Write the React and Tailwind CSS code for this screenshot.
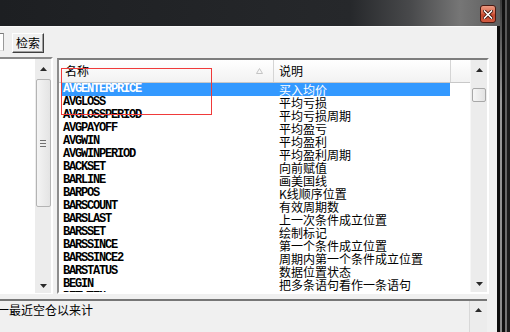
import React from "react";

const rows = [
  ["AVGENTERPRICE", "买入均价"],
  ["AVGLOSS", "平均亏损"],
  ["AVGLOSSPERIOD", "平均亏损周期"],
  ["AVGPAYOFF", "平均盈亏"],
  ["AVGWIN", "平均盈利"],
  ["AVGWINPERIOD", "平均盈利周期"],
  ["BACKSET", "向前赋值"],
  ["BARLINE", "画美国线"],
  ["BARPOS", "K线顺序位置"],
  ["BARSCOUNT", "有效周期数"],
  ["BARSLAST", "上一次条件成立位置"],
  ["BARSSET", "绘制标记"],
  ["BARSSINCE", "第一个条件成立位置"],
  ["BARSSINCE2", "周期内第一个条件成立位置"],
  ["BARSTATUS", "数据位置状态"],
  ["BEGIN", "把多条语句看作一条语句"],
  ["BETWEEN", "介于两个数之间"],
];

const cjk = "font-['Noto_Sans_CJK_SC','Noto_Sans',sans-serif]";
const mono = "font-['Liberation_Mono','DejaVu_Sans_Mono',monospace]";

function Up() {
  return (
    <svg width="7" height="4" viewBox="0 0 7 4">
      <polygon points="3.5,0 7,4 0,4" fill="#2a2a2a" />
    </svg>
  );
}
function Down() {
  return (
    <svg width="7" height="4" viewBox="0 0 7 4">
      <polygon points="0,0 7,0 3.5,4" fill="#2a2a2a" />
    </svg>
  );
}

export default function App() {
  return (
    <div className="relative w-[510px] h-[332px] overflow-hidden bg-[#1a1a1a] flex">
      <div className="w-[500px] h-full flex flex-col">
        {/* title bar */}
        <div className="h-[26px] w-full flex justify-end items-start pr-[4px] pt-[5px] bg-[linear-gradient(to_right,#1d1f22_0%,#26282b_70%,#48494b_82%,#767676_92%,#5e5e5e_100%)]">
          <div className="w-[16px] h-[18px] rounded-[3px] border border-[#4a1a12] bg-[linear-gradient(to_bottom,#ec9a82_0%,#d8664a_45%,#c4482e_55%,#d25a40_100%)] flex items-center justify-center">
            <svg width="10" height="9" viewBox="0 0 10 9">
              <path d="M1.5 1 L8.5 8 M8.5 1 L1.5 8" stroke="#3a1008" strokeWidth="3.2" strokeLinecap="square" />
              <path d="M1.5 1 L8.5 8 M8.5 1 L1.5 8" stroke="#ffffff" strokeWidth="1.6" strokeLinecap="square" />
            </svg>
          </div>
        </div>
        <div className="flex-1 flex">
          {/* client */}
          <div className="w-[497px] h-full bg-[#f0f0f0] border-t border-[#fafafa] flex flex-col">
            {/* search row */}
            <div className="h-[30px] flex items-start pt-[6px]">
              <div className="w-[4px] h-[18px] bg-white border-r border-[#9a9a9a] border-t border-b border-t-[#7a7a7a] border-b-[#e0e0e0]" />
              <div className={`ml-[8px] w-[32px] h-[20px] bg-[#f0f0f0] border border-t-white border-l-white border-r-[#404040] border-b-[#404040] shadow-[inset_-1px_-1px_0_#a0a0a0] flex items-center justify-center text-[12px] leading-[12px] text-black ${cjk}`}>
                检索
              </div>
            </div>
            {/* main row */}
            <div className="h-[237px] flex">
              {/* left panel */}
              <div className="w-[53px] h-full border-t-2 border-t-[#8a8a8a] border-r-2 border-r-white border-b border-b-white flex">
                <div className="w-[35px] h-full bg-white" />
                <div className="w-[16px] h-full bg-[#ececec] flex flex-col items-center">
                  <div className="h-[20px] flex items-center justify-center"><Up /></div>
                  <div className="w-[15px] h-[128px] rounded-[2px] border border-[#b4b4b4] bg-[linear-gradient(to_right,#f4f4f4,#e4e4e4)] flex flex-col items-center justify-center gap-[2px]">
                    <div className="w-[6px] h-px bg-[#707070]" />
                    <div className="w-[6px] h-px bg-[#707070]" />
                    <div className="w-[6px] h-px bg-[#707070]" />
                  </div>
                  <div className="flex-1" />
                  <div className="h-[14px] flex items-center justify-center"><Down /></div>
                </div>
              </div>
              {/* list frame */}
              <div className="ml-[4px] mt-[1px] w-[432px] h-[236px] border-t-2 border-l-2 border-t-[#7d7d7d] border-l-[#8d8d8d] border-r-2 border-b-2 border-r-white border-b-white flex">
                <div className="w-[411px] h-full bg-white flex flex-col overflow-hidden">
                  {/* header */}
                  <div className={`h-[23px] shrink-0 flex border-b border-[#c8c8c8] bg-[linear-gradient(to_bottom,#ffffff,#f2f2f2)] text-[12px] text-black ${cjk}`}>
                    <div className="w-[214px] h-full flex items-center pl-[6px] relative">
                      名称
                      <div className="absolute right-[10px] top-[8px]">
                        <svg width="7" height="6" viewBox="0 0 7 6">
                          <polygon points="3.5,0.5 6.5,5.5 0.5,5.5" fill="none" stroke="#c4c4c4" strokeWidth="1" />
                        </svg>
                      </div>
                    </div>
                    <div className="w-px h-full bg-[#d5d5d5]" />
                    <div className="w-[176px] h-full flex items-center pl-[5px]">说明</div>
                    <div className="w-px h-full bg-[#d5d5d5]" />
                    <div className="flex-1" />
                  </div>
                  {/* rows */}
                  {rows.map(([n, d], i) => (
                    <div
                      key={n}
                      className={`ml-[2px] w-[389px] h-[13px] shrink-0 flex items-center overflow-hidden ${i === 0 ? "bg-[#3399ff] text-white" : "text-black"}`}
                    >
                      <div className={`w-[216px] h-[13px] pl-[2px] text-[12px] leading-[13px] font-bold tracking-[-1.2px] overflow-hidden ${mono}`}>{n}</div>
                      <div className={`h-[13px] pl-[2px] text-[12px] leading-[13px] whitespace-nowrap overflow-hidden ${cjk}`}>{d}</div>
                    </div>
                  ))}
                </div>
                {/* scrollbar */}
                <div className="w-[17px] h-full bg-[#ececec] border-l border-[#f6f6f6] flex flex-col items-center">
                  <div className="h-[20px] flex items-center justify-center"><Up /></div>
                  <div className="mt-[8px] w-[14px] h-[14px] rounded-[2px] border border-[#a8a8a8] bg-[linear-gradient(to_right,#f6f6f6,#e2e2e2)]" />
                  <div className="flex-1" />
                  <div className="h-[17px] flex items-center justify-center"><Down /></div>
                </div>
              </div>
            </div>
            {/* bottom panel */}
            <div className="mt-[5px] w-[487px] flex-1 border-t-2 border-[#767676] flex">
              <div className={`flex-1 pt-[2px] -ml-[3px] text-[12px] leading-[13px] text-black ${cjk}`}>一最近空仓以来计</div>
              <div className="w-[18px] h-full border-l border-[#d8d8d8] bg-[#ececec] flex flex-col items-center">
                <div className="h-[18px] flex items-center justify-center"><Up /></div>
              </div>
            </div>
          </div>
          <div className="w-[3px] h-full bg-[#0e0e0e]" />
        </div>
      </div>
      {/* right stripes */}
      <div className="w-[10px] h-full flex">
        <div className="w-[2px] h-full bg-[linear-gradient(to_bottom,#3a3a3a,#9a9a9a_30%,#8a8a8a)]" />
        <div className="w-[3px] h-full bg-[#101010]" />
        <div className="w-[2px] h-full bg-[linear-gradient(to_bottom,#555,#777)]" />
        <div className="w-[3px] h-full bg-[#1c1c1c]" />
      </div>
      {/* red annotation rectangle */}
      <div className="absolute left-[61px] top-[68px] w-[151px] h-[47px] border border-[#f03a3a] pointer-events-none" />
    </div>
  );
}
